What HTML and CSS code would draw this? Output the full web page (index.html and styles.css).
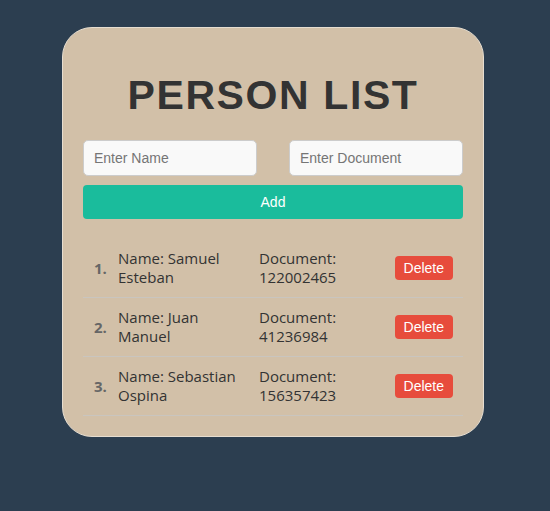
FILE: index.html
```html
<!DOCTYPE html>
<html>
<head>
<meta charset="utf-8">
<link rel="stylesheet" href="styles.css">
</head>
<body>
<div class="card">
  <h1 class="title">PERSON LIST</h1>
  <div class="form">
    <input class="field" type="text" placeholder="Enter Name">
    <input class="field" type="text" placeholder="Enter Document">
  </div>
  <button class="add">Add</button>
  <ul class="list">
    <li class="row"><span class="num">1.</span><span class="name">Name: Samuel Esteban</span><span class="doc">Document: 122002465</span><button class="del">Delete</button></li>
    <li class="row"><span class="num">2.</span><span class="name">Name: Juan Manuel</span><span class="doc">Document: 41236984</span><button class="del">Delete</button></li>
    <li class="row"><span class="num">3.</span><span class="name">Name: Sebastian Ospina</span><span class="doc">Document: 156357423</span><button class="del">Delete</button></li>
  </ul>
</div>
</body>
</html>
```
FILE: styles.css
```css
html, body { margin: 0; padding: 0; }
body {
  background: #2c3e50;
  height: 511px;
  padding-top: 27px;
  box-sizing: border-box;
  font-family: "Liberation Sans", Arial, sans-serif;
}
.card {
  width: 380px;
  margin: 0 0 0 62px;
  padding: 20px 20px 20px 20px;
  background: #d2c0a8;
  border: 1px solid #e6ddd0;
  border-radius: 30px;
}
.title {
  margin: 22px 0 19px 0;
  text-align: center;
  font-family: "Liberation Sans", Arial, sans-serif;
  font-size: 41px;
  font-weight: bold;
  letter-spacing: 1.6px;
  color: #333;
  line-height: 51px;
}
.form {
  display: flex;
  justify-content: space-between;
}
.field {
  width: 174px;
  height: 36px;
  box-sizing: border-box;
  border: 1px solid #ccc;
  border-radius: 5px;
  background: #f9f9f9;
  padding: 0 10px;
  font-family: "Liberation Sans", Arial, sans-serif;
  font-size: 14px;
  color: #333;
  outline: none;
}
.field::placeholder { color: #757575; }
.add {
  display: block;
  width: 100%;
  height: 34px;
  margin-top: 9px;
  border: none;
  border-radius: 4px;
  background: #1abc9c;
  color: #fff;
  font-family: "Liberation Sans", Arial, sans-serif;
  font-size: 14px;
}
.list {
  list-style: none;
  margin: 20px 0 0 0;
  padding: 0;
}
.row {
  display: flex;
  align-items: center;
  justify-content: space-between;
  padding: 10px 10px 10px 11px;
  border-bottom: 1px solid #c9c5bf;
  font-family: "Open Sans", "DejaVu Sans", sans-serif;
  font-size: 15px;
  line-height: 19px;
  color: #333;
}
.num {
  flex: none;
  width: 24px;
  font-weight: bold;
  color: #666;
}
.name { flex: 0 1 125px; }
.doc { flex: 0 1 120px; margin-right: auto; margin-left: 16px; }
.del {
  flex: none;
  height: 24px;
  padding: 0 9px;
  border: none;
  border-radius: 4px;
  background: #e74c3c;
  color: #fff;
  font-family: "Liberation Sans", Arial, sans-serif;
  font-size: 14px;
}
```
